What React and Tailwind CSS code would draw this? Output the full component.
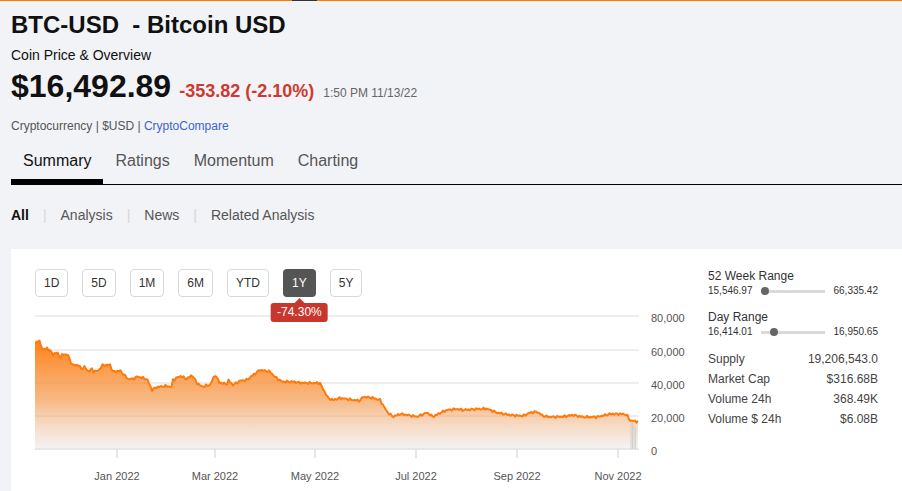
import React from 'react';

const KEYS = [[35,342.7],[39,340.5],[43,350],[47,348],[50,350.7],[53,354],[58,352.7],[60,358],[63,354],[68,355],[72,365],[78,365],[82,369],[85,366.7],[88,371.7],[92,369],[93,371.7],[98,370.7],[103,365],[110,365],[113,371.7],[120,370.7],[128,379],[133,379],[137,376.7],[147,379],[152,390],[157,387],[167,386],[172,387],[173,380],[180,376],[187,379],[192,375],[197,383],[202,386.7],[210,385],[215,375],[220,383],[227,384],[228,380],[233,385],[240,380.7],[247,380],[253,375],[260,370],[270,371.7],[275,377],[282,381.7],[293,381.7],[303,383],[313,383],[320,383],[323,389],[328,398],[333,400],[340,398],[353,400],[360,400.7],[363,396.7],[373,398],[380,400],[387,411.7],[393,416.7],[400,414],[407,415],[417,416.7],[427,412.7],[433,416.7],[440,413],[447,410],[457,409],[463,410],[477,409],[487,408.7],[497,412.7],[510,415],[523,416],[530,412.7],[537,411.7],[543,416],[550,417],[563,416.7],[573,415],[583,417],[597,417],[610,414],[623,414],[627,415],[630,420.7],[634,421],[638,421.7]];

// interpolate the key points and add a little wobble so the line looks like real ticks
function buildLine() {
  const pts = [];
  let k = 0;
  for (let x = 35; x <= 638; x += 1.5) {
    while (k < KEYS.length - 2 && KEYS[k + 1][0] < x) k++;
    const [x0, y0] = KEYS[k];
    const [x1, y1] = KEYS[k + 1];
    const t = Math.min(1, Math.max(0, (x - x0) / (x1 - x0)));
    const noise = 0.8 * Math.sin(x * 1.7) + 0.5 * Math.sin(x * 3.1 + 1);
    pts.push([x, y0 + (y1 - y0) * t + noise]);
  }
  return pts;
}

const line = buildLine();
const linePath = line.map(([x, y], i) => `${i ? 'L' : 'M'}${x.toFixed(1)} ${y.toFixed(1)}`).join(' ');
const areaPath = `${linePath} L638 449 L35 449 Z`;

const grid = [
  { y: 316, label: '80,000' },
  { y: 350, label: '60,000' },
  { y: 383, label: '40,000' },
  { y: 416, label: '20,000' },
  { y: 449, label: '0' },
];

const ticks = [
  { x: 117, label: 'Jan 2022' },
  { x: 215, label: 'Mar 2022' },
  { x: 315, label: 'May 2022' },
  { x: 416, label: 'Jul 2022' },
  { x: 517, label: 'Sep 2022' },
  { x: 618, label: 'Nov 2022' },
];

const ranges = ['1D', '5D', '1M', '6M', 'YTD', '1Y', '5Y'];

function Chart() {
  return (
    <svg width="655" height="186" viewBox="35 305 655 186" className="block">
      <defs>
        <linearGradient id="fill" x1="0" y1="340" x2="0" y2="449" gradientUnits="userSpaceOnUse">
          <stop offset="0" stopColor="#ff7a0a" stopOpacity="0.95" />
          <stop offset="0.55" stopColor="#f59a4e" stopOpacity="0.7" />
          <stop offset="1" stopColor="#ebe6e6" stopOpacity="0.5" />
        </linearGradient>
      </defs>
      {grid.map((g) => (
        <line key={g.y} x1="35" x2="639" y1={g.y} y2={g.y} stroke={g.y === 449 ? '#cfcfcf' : '#dcdcdc'} strokeWidth="1" />
      ))}
      <path d={areaPath} fill="url(#fill)" />
      {[631, 632.5, 634, 635.5].map((x, i) => (
        <line key={x} x1={x} x2={x} y1={419 + i * 3} y2="449" stroke="#c9c9c9" strokeWidth="0.8" />
      ))}
      <path d={linePath} fill="none" stroke="#ff7a0a" strokeWidth="2" strokeLinejoin="round" />
      {ticks.map((t) => (
        <g key={t.x}>
          <line x1={t.x} x2={t.x} y1="449" y2="458" stroke="#cfcfcf" />
          <text x={t.x} y="480" textAnchor="middle" fontSize="11" fill="#555" fontFamily="'Liberation Sans', Arial, sans-serif">{t.label}</text>
        </g>
      ))}
      {grid.map((g) => (
        <text key={g.label} x="651" y={g.y + 6} fontSize="11" fill="#555" fontFamily="'Liberation Sans', Arial, sans-serif">{g.label}</text>
      ))}
    </svg>
  );
}

function RangeBar({ low, high, dot }) {
  return (
    <div className="flex items-center justify-between text-[10px] leading-[14px] text-[#333]">
      <span>{low}</span>
      <div className="relative h-[3px] w-[64px] bg-[#d9d9d9]">
        <span className="absolute top-1/2 h-[8px] w-[8px] -translate-y-1/2 rounded-full bg-[#666]" style={{ left: dot }} />
      </div>
      <span>{high}</span>
    </div>
  );
}

const stats = [
  ['Supply', '19,206,543.0'],
  ['Market Cap', '$316.68B'],
  ['Volume 24h', '368.49K'],
  ['Volume $ 24h', '$6.08B'],
];

export default function App() {
  return (
    <div className="h-[491px] overflow-hidden bg-[#f2f3f7] font-['Liberation_Sans',Arial,sans-serif] text-[#111]">
      {/* top accent */}
      <div className="flex h-px">
        <div className="w-[292px] bg-[#ff7a00]" />
        <div className="w-[25px] bg-[#333]" />
        <div className="flex-1 bg-[#ff7a00]" />
      </div>

      <div className="pl-[11px] pt-[10px]">
        <h1 className="text-[24px] font-bold leading-[28px] whitespace-pre">BTC-USD  - Bitcoin USD</h1>
        <p className="mt-[6px] text-[14px] leading-[20px] text-[#111]">Coin Price &amp; Overview</p>
        <div className="mt-[3px] flex items-baseline">
          <span className="text-[32px] font-bold leading-[36px]">$16,492.89</span>
          <span className="ml-[8px] text-[18px] font-bold text-[#cc3a30]">-353.82 (-2.10%)</span>
          <span className="ml-[9px] text-[12px] text-[#666]">1:50 PM 11/13/22</span>
        </div>
        <p className="mt-[13px] text-[12px] leading-[16px] text-[#555]">
          Cryptocurrency | $USD | <span className="text-[#3d63c9]">CryptoCompare</span>
        </p>

        <div className="mt-[9px] flex border-b border-black">
          <div className="-mb-px flex h-[41px] items-center border-b-[5px] border-black px-3 text-[16px] text-[#111]">Summary</div>
          <div className="flex h-[41px] items-center px-3 pb-[5px] text-[16px] text-[#555]">Ratings</div>
          <div className="flex h-[41px] items-center px-3 pb-[5px] text-[16px] text-[#555]">Momentum</div>
          <div className="flex h-[41px] items-center px-3 pb-[5px] text-[16px] text-[#555]">Charting</div>
        </div>

        <div className="mt-[21px] flex items-center text-[14px] leading-[18px] text-[#555]">
          <span className="font-bold text-[#111]">All</span>
          <span className="mx-[14px] text-[#d5d5d5]">|</span>
          <span>Analysis</span>
          <span className="mx-[14px] text-[#d5d5d5]">|</span>
          <span>News</span>
          <span className="mx-[14px] text-[#d5d5d5]">|</span>
          <span>Related Analysis</span>
        </div>
      </div>

      <div className="ml-[11px] mt-[25px] flex h-[260px] bg-white pl-[24px]">
        <div className="w-[673px] pt-[20px]">
          <div className="flex gap-[14px]">
            {ranges.map((r) =>
              r === '1Y' ? (
                <div key={r} className="relative">
                  <div className="flex h-[28px] items-center rounded-[4px] bg-[#555] px-[9px] text-[12px] text-white">{r}</div>
                  <div className="absolute left-1/2 top-[34px] z-10 -translate-x-1/2">
                    <div className="absolute -top-[5px] left-1/2 h-0 w-0 -translate-x-1/2 border-x-[5px] border-b-[5px] border-x-transparent border-b-[#c8372d]" />
                    <div className="whitespace-nowrap rounded-[3px] bg-[#c8372d] px-[6px] text-[12px] leading-[19px] text-white">-74.30%</div>
                  </div>
                </div>
              ) : (
                <div key={r} className="flex h-[28px] items-center rounded-[4px] border border-[#d8d8d8] px-[8px] text-[12px] text-[#333]">{r}</div>
              )
            )}
          </div>
          <div className="mt-[8px]">
            <Chart />
          </div>
        </div>

        <div className="w-[170px] pt-[19px] text-[#333]">
          <div className="text-[12px] leading-[16px]">52 Week Range</div>
          <RangeBar low="15,546.97" high="66,335.42" dot="0px" />
          <div className="mt-[11px] text-[12px] leading-[16px]">Day Range</div>
          <RangeBar low="16,414.01" high="16,950.65" dot="9px" />
          <div className="mt-[10px] flex flex-col">
            {stats.map(([k, v]) => (
              <div key={k} className="flex justify-between text-[12px] leading-[20px] text-[#444]">
                <span>{k}</span>
                <span>{v}</span>
              </div>
            ))}
          </div>
        </div>
      </div>
    </div>
  );
}
